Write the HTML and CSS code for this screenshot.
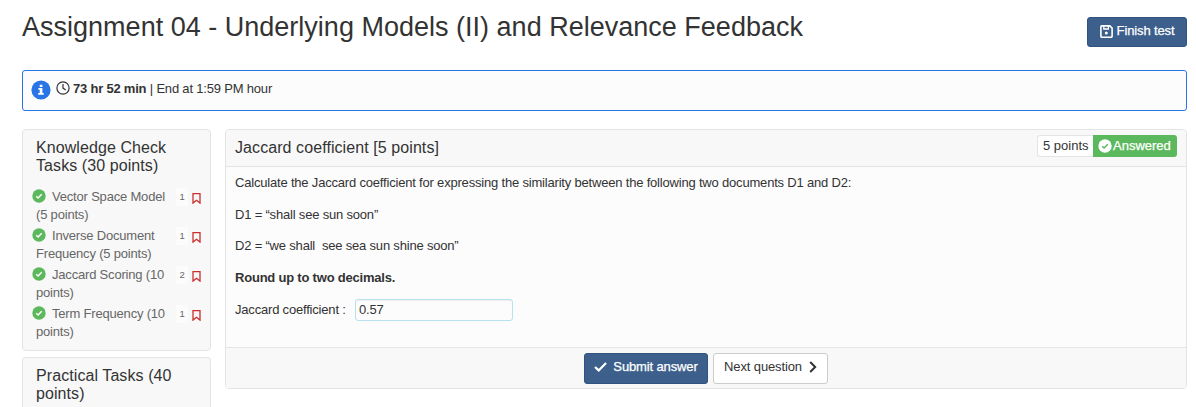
FILE: index.html
```html
<!DOCTYPE html>
<html lang="en">
<head>
<meta charset="utf-8">
<title>Assignment 04</title>
<link rel="stylesheet" href="styles.css">
</head>
<body>
<svg class="defs" width="0" height="0">
  <symbol id="check" viewBox="0 0 14 14"><circle cx="7" cy="7" r="6.7" fill="currentColor"/><path class="tick" d="M4.2 7.2l1.9 1.8 3.6-3.7" fill="none" stroke-width="1.5"/></symbol>
  <symbol id="bookmark" viewBox="0 0 9 11"><path d="M1 .7h7v9.4L4.5 7.3 1 10.1z" fill="none" stroke="#c9302c" stroke-width="1.3"/></symbol>
</svg>
<header class="top">
  <h1>Assignment 04 - Underlying Models (II) and Relevance Feedback</h1>
  <button class="btn primary finish">
    <svg width="13" height="13" viewBox="0 0 13 13" fill="none" stroke="#fff" stroke-width="1.6"><path d="M1.8.9h8l2.3 2.3v8.1a.9.9 0 0 1-.9.9H1.8a.9.9 0 0 1-.9-.9V1.8a.9.9 0 0 1 .9-.9z"/><path d="M3.8 1v3h4.6V1" stroke-width="1.3"/><circle cx="6.3" cy="7.9" r="1.5" fill="#fff" stroke="none"/></svg>
    <span>Finish test</span>
  </button>
</header>
<section class="notice">
  <svg width="20" height="20" viewBox="0 0 20 20"><circle cx="10" cy="10" r="9.6" fill="#2a75e6"/><path fill="#fff" d="M8.7 4.7h2.7v2.2H8.7zM7.4 8h4v5h1.3v1.7H7.2V13h1.5V9.7H7.4z"/></svg>
  <svg class="clock" width="14" height="14" viewBox="0 0 14 14" fill="none" stroke="#333" stroke-width="1.2"><circle cx="7" cy="7" r="6.1"/><path d="M7 3v4.1l2.7 1.8"/></svg>
  <p><b>73 hr 52 min</b> | End at 1:59 PM hour</p>
</section>
<div class="columns">
  <aside>
    <section class="tasks">
      <h2>Knowledge Check Tasks (30 points)</h2>
      <ul>
        <li><p><svg class="done"><use href="#check"/></svg>Vector Space Model (5 points)</p><span class="count">1</span><svg class="mark"><use href="#bookmark"/></svg></li>
        <li><p><svg class="done"><use href="#check"/></svg>Inverse Document Frequency (5 points)</p><span class="count">1</span><svg class="mark"><use href="#bookmark"/></svg></li>
        <li><p><svg class="done"><use href="#check"/></svg>Jaccard Scoring (10 points)</p><span class="count">2</span><svg class="mark"><use href="#bookmark"/></svg></li>
        <li><p><svg class="done"><use href="#check"/></svg>Term Frequency (10 points)</p><span class="count">1</span><svg class="mark"><use href="#bookmark"/></svg></li>
      </ul>
    </section>
    <section class="tasks cut">
      <h2>Practical Tasks (40 points)</h2>
    </section>
  </aside>
  <main class="question">
    <header class="qhead">
      <h2>Jaccard coefficient [5 points]</h2>
      <div class="status"><span class="pts">5 points</span><span class="answered"><svg width="14" height="14"><use href="#check"/></svg><span>Answered</span></span></div>
    </header>
    <div class="qbody">
      <p>Calculate the Jaccard coefficient for expressing the similarity between the following two documents D1 and D2:</p>
      <p>D1 = “shall see sun soon”</p>
      <p>D2 = “we shall&nbsp; see sea sun shine soon”</p>
      <p><b>Round up to two decimals.</b></p>
      <div class="field"><label for="ans">Jaccard coefficient :</label><input id="ans" type="text" value="0.57"></div>
    </div>
    <footer class="qfoot">
      <button class="btn primary submit"><svg width="13" height="10" viewBox="0 0 13 10" fill="none" stroke="#fff" stroke-width="2.2"><path d="M1 5l3.7 3.4L12 1"/></svg><span>Submit answer</span></button>
      <button class="btn next"><span>Next question</span><svg width="8" height="12" viewBox="0 0 8 12" fill="none" stroke="#333" stroke-width="2"><path d="M1.2 1l5 5-5 5"/></svg></button>
    </footer>
  </main>
</div>
</body>
</html>
```
FILE: styles.css
```css
* { box-sizing: border-box; }
body {
  margin: 0;
  padding: 0 9px 0 22px;
  background: #fff;
  color: #333;
  font: 13px/18px "Liberation Sans", Arial, sans-serif;
  letter-spacing: -.19px;
}
h1, h2, p, ul { margin: 0; padding: 0; font-weight: 400; }
h2 { font-size: 16px; letter-spacing: .08px; }
b { letter-spacing: -.21px; }
svg { display: block; flex: none; }
.defs { position: absolute; }
.top { display: flex; justify-content: space-between; height: 70px; }
h1 { font-size: 27px; line-height: 32px; padding-top: 11px; white-space: nowrap; letter-spacing: .01px; }
.btn {
  display: flex;
  align-items: center;
  justify-content: center;
  padding: 0 0 2px;
  border: 1px solid #ccc;
  border-radius: 3px;
  background: #fff;
  color: #333;
  font: 13px/18px "Liberation Sans", Arial, sans-serif;
  letter-spacing: -.13px;
  white-space: nowrap;
}
.primary { background: #3d5f8c; border-color: #2f5480; color: #fff; -webkit-text-stroke: .25px #fff; }
.finish { width: 100px; height: 30px; margin-top: 17px; gap: 4px; }
.notice {
  display: flex;
  height: 41px;
  padding: 9px 8px;
  border: 1px solid #2a75e6;
  border-radius: 3px;
  background: #fcfcfc;
}
.clock { margin: 1px 3px 0 5px; }
.columns { display: flex; align-items: flex-start; gap: 14px; margin-top: 18px; height: 278px; }
aside { width: 189px; flex: none; }
.tasks { height: 222px; margin-bottom: 6px; padding: 9px 9px 0; border: 1px solid #e4e4e4; border-radius: 4px; background: #f8f8f8; }
.tasks.cut { height: 50px; margin: 0; border-bottom: 0; border-radius: 4px 4px 0 0; }
.tasks h2 { padding: 0 4px; line-height: 18px; width: 165px; }
.tasks ul { list-style: none; padding-top: 13px; }
.tasks li { display: flex; height: 39px; color: #666; }
.tasks li p { width: 140px; padding-left: 4px; text-indent: -4px; }
.done { display: inline-block; width: 14px; height: 14px; color: #5cb85c; vertical-align: -2px; margin-right: 6px; }
.tick { stroke: var(--tick, #fff); }
.count { width: 12px; height: 18px; margin-left: 4px; background: #fcfcfc; font-size: 9.5px; text-align: center; }
.mark { width: 9px; height: 11px; margin: 5px 0 0 4px; }
.question { flex: 1; display: flex; flex-direction: column; height: 260px; border: 1px solid #e4e4e4; border-radius: 4px; background: #fcfcfc; overflow: hidden; }
.qhead { display: flex; justify-content: space-between; height: 37px; padding: 5px 9px; border-bottom: 1px solid #e4e4e4; background: #f8f8f8; }
.qhead h2 { line-height: 25px; }
.status { display: flex; height: 22px; letter-spacing: 0; }
.pts { width: 56px; padding-left: 5px; border: 1px solid #e4e4e4; border-right: 0; border-radius: 3px 0 0 3px; background: #fff; line-height: 20px; }
.answered { display: flex; align-items: center; gap: 1px; width: 84px; padding: 0 0 1px 5px; border-radius: 0 3px 3px 0; background: #5cb85c; color: #fff; --tick: #5cb85c; -webkit-text-stroke: .25px #fff; }
.qbody { height: 180px; padding: 7px 9px; }
.qbody p { height: 31.7px; }
.field { display: flex; align-items: flex-start; gap: 9px; margin-top: -2px; }
.field label { padding-top: 2px; width: 111px; white-space: nowrap; }
.field input { width: 158px; height: 22px; padding: 0 3px; border: 1px solid #b4e2ee; border-radius: 3px; background: #fcfcfc; color: #333; font: inherit; letter-spacing: inherit; box-shadow: inset 0 1px 1px #eee; }
.qfoot { flex: 1; display: flex; justify-content: center; gap: 5px; padding-top: 5px; border-top: 1px solid #e4e4e4; background: #f8f8f8; }
.submit { width: 124px; height: 31px; gap: 6px; padding-bottom: 3px; }
.next { width: 115px; height: 31px; gap: 7px; padding-bottom: 3px; }
```
